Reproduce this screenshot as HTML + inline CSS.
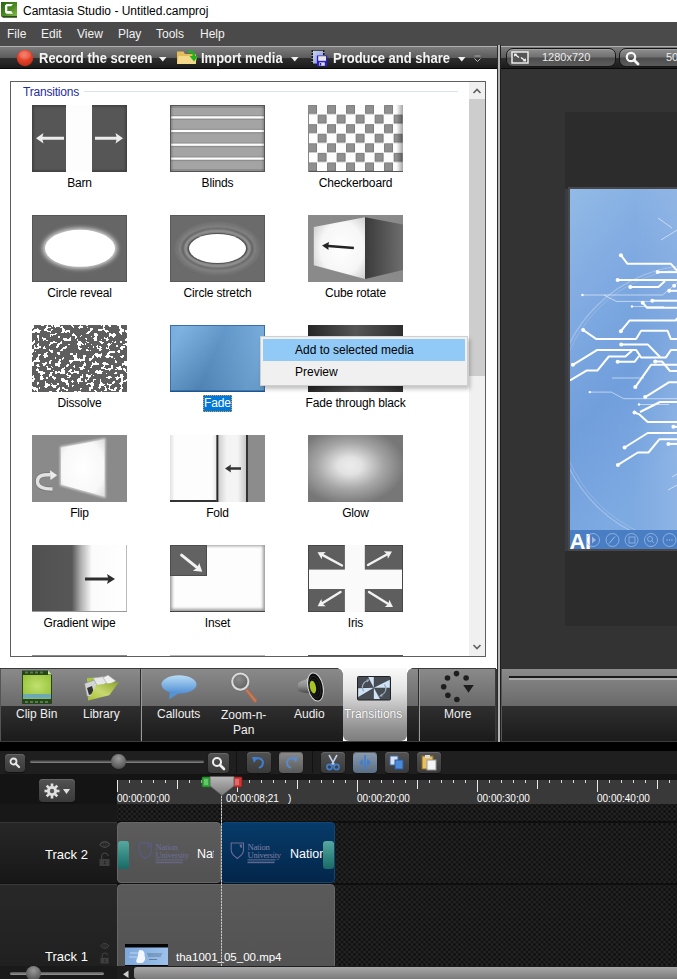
<!DOCTYPE html>
<html><head><meta charset="utf-8">
<style>
*{margin:0;padding:0;box-sizing:border-box}
html,body{width:677px;height:979px;overflow:hidden;background:#333;font-family:"Liberation Sans",sans-serif}
.a{position:absolute}
.t{position:absolute;white-space:nowrap;line-height:1}
#title{left:0;top:0;width:677px;height:22px;background:#fff}
#menu{left:0;top:22px;width:677px;height:24px;background:#4a4a4a}
#menu .t{color:#f2f2f2;font-size:12px;top:6px}
#tb{left:0;top:46px;width:497px;height:23px;background:linear-gradient(#b0b0b0 0,#b0b0b0 1px,#7c7c7c 1px,#5a5a5a 12px,#2e2e2e 12px,#1b1b1b 22px,#080808 22px)}
#tb .t{color:#f4f4f4;font-size:13px;font-weight:bold;top:5px;transform:scaleY(1.06);transform-origin:0 0}
#left{left:0;top:69px;width:497px;height:600px;background:#fff}
#box{left:10px;top:81px;width:476px;height:576px;border:1px solid #5e5e5e;background:#fff;overflow:hidden}
.th{position:absolute;width:95px;height:67px;overflow:hidden}
.tl{position:absolute;top:708px;font-size:12px;color:#f0f0f0;line-height:1;white-space:nowrap}
.btn{border-radius:4px;background:linear-gradient(#525252,#3a3a3a);box-shadow:inset 0 1px 0 #666,0 1px 1px #111}
.tex{background:radial-gradient(circle at 50% 50%,#0e0e0e 0,#141414 1.2px,transparent 2.2px) 0 0/5px 5px,radial-gradient(circle at 50% 50%,#0e0e0e 0,#141414 1.2px,transparent 2.2px) 2.5px 2.5px/5px 5px,#2a2a2a}
.tc{position:absolute;top:794px;font-size:10px;color:#fff;white-space:nowrap;line-height:1}
.lb{position:absolute;width:139px;text-align:center;font-size:12px;letter-spacing:-0.15px;color:#000;line-height:1}
</style></head><body>
<!-- title bar -->
<div id="title" class="a">
  <svg class="a" style="left:0;top:0" width="20" height="20" viewBox="0 0 20 20">
    <defs><linearGradient id="lg" x1="0" y1="0" x2="1" y2="1"><stop offset="0" stop-color="#2a6214"/><stop offset=".55" stop-color="#4a8a22"/><stop offset="1" stop-color="#86b84a"/></linearGradient></defs>
    <rect x="1" y="2" width="16" height="14" fill="url(#lg)"/>
    <path d="M1 16 L17 16 L17 17.7 L3 17.7Z" fill="#2b4f14"/>
    <path d="M6.5 4 L13 4 L11.2 6.3 L7.3 6.3 L7.3 11.1 L11.2 11.1 L13 13.7 L6.5 13.7 L5 12.2 L5 5.5Z" fill="#fff"/>
  </svg>
  <div class="t" style="left:23px;top:5px;font-size:12px;color:#000">Camtasia Studio - Untitled.camproj</div>
</div>
<!-- menu -->
<div id="menu" class="a">
  <div class="t" style="left:7px">File</div>
  <div class="t" style="left:41px">Edit</div>
  <div class="t" style="left:77px">View</div>
  <div class="t" style="left:118px">Play</div>
  <div class="t" style="left:156px">Tools</div>
  <div class="t" style="left:200px">Help</div>
</div>
<!-- toolbar -->
<div id="tb" class="a">
  
  <svg class="a" style="left:16px;top:3px" width="18" height="18" viewBox="0 0 18 18">
   <defs><radialGradient id="rc" cx=".45" cy=".3" r=".75"><stop offset="0" stop-color="#f6705a"/><stop offset=".5" stop-color="#e5432a"/><stop offset="1" stop-color="#b82a14"/></radialGradient></defs>
   <circle cx="9" cy="9" r="8.2" fill="url(#rc)"/>
   <ellipse cx="9" cy="6" rx="6" ry="4" fill="#fff" opacity=".13"/>
  </svg>
  <svg class="a" style="left:159px;top:11px" width="8" height="5"><path d="M0 0H7.5L3.75 4.5Z" fill="#f0f0f0"/></svg>
  <svg class="a" style="left:176px;top:3px" width="22" height="16" viewBox="0 0 22 16">
   <path d="M1 2.5 L1 15 L20 15 L20 5 L9 5 L7.5 2.5Z" fill="#e3bf5c"/>
   <path d="M2.5 7 L21 7 L19.5 15 L1 15Z" fill="#f4d98a"/>
   <path d="M12 3 C16 1.5, 18 4, 18 7.5" fill="none" stroke="#1fb31f" stroke-width="2.6"/>
   <path d="M13.5 7 L22 7 L18 12.5Z" fill="#1fb31f"/>
  </svg>
  <svg class="a" style="left:291px;top:11px" width="8" height="5"><path d="M0 0H7.5L3.75 4.5Z" fill="#f0f0f0"/></svg>
  <svg class="a" style="left:311px;top:4px" width="17" height="17" viewBox="0 0 17 17">
   <defs><linearGradient id="pf" x1="0" y1="0" x2="1" y2="1"><stop offset="0" stop-color="#c8d4f4"/><stop offset="1" stop-color="#8898d0"/></linearGradient></defs>
   <rect x="0.5" y="0.2" width="13" height="14" fill="#151515"/>
   <rect x="2" y="0.8" width="10" height="12.8" fill="url(#pf)"/>
   <g fill="#e8e8e8"><rect x="0.6" y="2" width="1" height="1"/><rect x="0.6" y="5" width="1" height="1"/><rect x="0.6" y="8" width="1" height="1"/><rect x="0.6" y="11" width="1" height="1"/><rect x="12.4" y="2" width="1" height="1"/><rect x="12.4" y="5" width="1" height="1"/></g>
   <rect x="5.9" y="5.5" width="10.3" height="10.7" fill="#2a1ec8"/>
   <rect x="7.2" y="6.2" width="7.8" height="4.6" fill="#e8e8e0"/>
   <rect x="8.3" y="12.3" width="5.5" height="3.5" fill="#d8d8d8"/><rect x="9" y="13" width="1.2" height="2.5" fill="#2a1ec8"/>
  </svg>
  <svg class="a" style="left:458px;top:11px" width="8" height="5"><path d="M0 0H7.5L3.75 4.5Z" fill="#f0f0f0"/></svg>
  <svg class="a" style="left:474px;top:9px" width="7" height="8"><path d="M0.5 1H6.5" stroke="#aaa" stroke-width="1"/><path d="M0.5 3.5L3.5 6.5L6.5 3.5" fill="none" stroke="#bbb" stroke-width="1"/></svg>
  <div class="t" style="left:39px">Record the screen</div>
  <div class="t" style="left:201px">Import media</div>
  <div class="t" style="left:333px">Produce and share</div>
</div>
<!-- left panel -->
<div id="left" class="a"></div>
<div id="box" class="a"></div>

<!-- transitions group -->
<div class="t" style="left:23px;top:86px;font-size:12px;letter-spacing:-0.2px;color:#1f2c9e">Transitions</div>
<div class="a" style="left:84px;top:91px;width:374px;height:1px;background:#dce3ee"></div>
<!-- scrollbar -->
<div class="a" style="left:469px;top:82px;width:16px;height:574px;background:#f0f0f0"></div>
<div class="a" style="left:469px;top:99px;width:16px;height:277px;background:#cdcdcd"></div>
<svg class="a" style="left:469px;top:82px" width="16" height="17"><path d="M4.5 11 L8 7.5 L11.5 11" fill="none" stroke="#606060" stroke-width="1.6"/></svg>
<svg class="a" style="left:469px;top:639px" width="16" height="17"><path d="M4.5 6 L8 9.5 L11.5 6" fill="none" stroke="#606060" stroke-width="1.6"/></svg>

<!-- Barn -->
<svg class="th" style="left:32px;top:105px" viewBox="0 0 95 67">
 <defs><filter id="ish" x="-10%" y="-10%" width="120%" height="120%"><feGaussianBlur stdDeviation="1.2"/></filter></defs>
 <rect width="95" height="67" fill="#3e3e3e"/><rect x="1.5" y="1.5" width="92" height="64" fill="#565656" filter="url(#ish)"/>
 <rect x="34" y="0" width="26" height="67" fill="#fdfdfd"/>
 <g fill="#ececec"><path d="M4 33.3 L11.5 28 L10.5 31.8 L32 31.8 L32 34.8 L10.5 34.8 L11.5 38.6Z"/><path d="M91 33.3 L83.5 28 L84.5 31.8 L63 31.8 L63 34.8 L84.5 34.8 L83.5 38.6Z"/></g>
</svg>
<div class="lb" style="left:10px;top:177px">Barn</div>

<!-- Blinds -->
<svg class="th" style="left:170px;top:105px" viewBox="0 0 95 67">
 <defs><linearGradient id="blx" x1="0" y1="0" x2="1" y2="0"><stop offset="0" stop-color="#000" stop-opacity=".25"/><stop offset=".04" stop-color="#000" stop-opacity="0"/><stop offset=".96" stop-color="#000" stop-opacity="0"/><stop offset="1" stop-color="#000" stop-opacity=".25"/></linearGradient></defs>
 <rect width="95" height="67" fill="#a4a4a4"/>
 <g fill="#8e8e8e"><rect x="0" y="0" width="95" height="3"/><rect x="0" y="13.4" width="95" height="1.5"/><rect x="0" y="27" width="95" height="1.5"/><rect x="0" y="40.7" width="95" height="1.5"/><rect x="0" y="54.6" width="95" height="1.5"/><rect x="0" y="10.2" width="95" height="1.2"/><rect x="0" y="23.8" width="95" height="1.2"/><rect x="0" y="37.5" width="95" height="1.2"/><rect x="0" y="51.4" width="95" height="1.2"/><rect x="0" y="64" width="95" height="3"/></g>
 <g fill="#fdfdfd"><rect x="0" y="11.3" width="95" height="2.2"/><rect x="0" y="24.9" width="95" height="2.2"/><rect x="0" y="38.6" width="95" height="2.2"/><rect x="0" y="52.5" width="95" height="2.2"/></g>
 <rect width="95" height="67" fill="url(#blx)"/>
 <rect x="0.5" y="0.5" width="94" height="66" fill="none" stroke="#555" stroke-width="1"/>
</svg>
<div class="lb" style="left:148px;top:177px">Blinds</div>

<!-- Checkerboard -->
<svg class="th" style="left:308px;top:105px" viewBox="0 0 95 67">
 <defs><pattern id="ck" width="19" height="19.14" patternUnits="userSpaceOnUse">
   <rect width="19" height="19.14" fill="#fdfdfd"/>
   <rect x="0.6" y="0.6" width="8" height="8" fill="#909090" stroke="#6e6e6e" stroke-width=".8"/>
   <rect x="10.1" y="10.17" width="8" height="8" fill="#909090" stroke="#6e6e6e" stroke-width=".8"/>
 </pattern>
 <linearGradient id="ckr" x1="0" y1="0" x2="1" y2="0"><stop offset="0" stop-color="#000" stop-opacity="0"/><stop offset=".93" stop-color="#000" stop-opacity="0"/><stop offset="1" stop-color="#000" stop-opacity=".35"/></linearGradient></defs>
 <rect width="95" height="67" fill="url(#ck)"/>
 <rect width="95" height="67" fill="url(#ckr)"/>
 <rect x="0" y="66" width="95" height="1" fill="#555"/><rect x="0" y="0" width="1" height="67" fill="#888"/>
</svg>
<div class="lb" style="left:286px;top:177px">Checkerboard</div>

<!-- Circle reveal -->
<svg class="th" style="left:32px;top:215px" viewBox="0 0 95 67">
 <defs><filter id="gl1" x="-30%" y="-30%" width="160%" height="160%"><feGaussianBlur stdDeviation="2.2"/></filter></defs>
 <rect width="95" height="67" fill="#666"/>
 <rect x="0" y="0" width="95" height="67" fill="none" stroke="#555" stroke-width="2"/>
 <ellipse cx="48" cy="33.3" rx="37.5" ry="20.5" fill="#d0d0d0" filter="url(#gl1)"/>
 <ellipse cx="48" cy="33.3" rx="35" ry="18.5" fill="#fff"/>
</svg>
<div class="lb" style="left:10px;top:287px">Circle reveal</div>

<!-- Circle stretch -->
<svg class="th" style="left:170px;top:215px" viewBox="0 0 95 67">
 <defs><filter id="gl2" x="-30%" y="-30%" width="160%" height="160%"><feGaussianBlur stdDeviation="0.9"/></filter></defs>
 <rect width="95" height="67" fill="#6b6b6b"/>
 <rect x="0" y="0" width="95" height="67" fill="none" stroke="#5a5a5a" stroke-width="2"/>
 <g filter="url(#gl2)" fill="none">
 <ellipse cx="47.5" cy="33.5" rx="41" ry="25" stroke="#7a7a7a" stroke-width="2"/>
 <ellipse cx="47.5" cy="33.5" rx="37.5" ry="22" stroke="#8c8c8c" stroke-width="2"/>
 <ellipse cx="47.5" cy="33.5" rx="34.5" ry="19.5" stroke="#555" stroke-width="2"/>
 <ellipse cx="47.5" cy="33.5" rx="32" ry="17.5" stroke="#a8a8a8" stroke-width="2"/>
 </g>
 <ellipse cx="47.5" cy="33.5" rx="30" ry="15.5" fill="#555"/>
 <ellipse cx="47.5" cy="33.5" rx="28.5" ry="14.5" fill="#fff"/>
</svg>
<div class="lb" style="left:148px;top:287px">Circle stretch</div>

<!-- Cube rotate -->
<svg class="th" style="left:308px;top:215px" viewBox="0 0 95 67">
 <defs>
  <radialGradient id="cf" cx=".55" cy=".5" r=".7"><stop offset="0" stop-color="#fff"/><stop offset=".6" stop-color="#f6f6f6"/><stop offset="1" stop-color="#c8c8c8"/></radialGradient>
  <linearGradient id="cs" x1="0" y1="0" x2="1" y2="0"><stop offset="0" stop-color="#3a3a3a"/><stop offset="1" stop-color="#6e6e6e"/></linearGradient>
 </defs>
 <rect width="95" height="67" fill="#8a8a8a"/>
 <path d="M5.8 12 L57 2.3 L57 64 L5.8 50.3Z" fill="url(#cf)"/>
 <path d="M57 2.3 L95 9.6 L95 55 L57 64Z" fill="url(#cs)"/>
 <path d="M14 30.5 L21 27 L20.5 29.8 L46 31.8 L45.8 34.2 L20.3 32.2 L20.6 35 Z" fill="#252525"/>
</svg>
<div class="lb" style="left:286px;top:287px">Cube rotate</div>

<!-- Dissolve -->
<svg class="th" style="left:32px;top:325px" viewBox="0 0 95 67">
 <defs><filter id="dz" x="0" y="0" width="100%" height="100%">
  <feTurbulence type="fractalNoise" baseFrequency="0.24" numOctaves="2" seed="11" result="n"/>
  <feColorMatrix in="n" type="matrix" values="0 0 0 0 1  0 0 0 0 1  0 0 0 0 1  6 0 0 0 -3.0"/>
  <feComponentTransfer><feFuncA type="discrete" tableValues="0 1"/></feComponentTransfer>
 </filter></defs>
 <rect width="95" height="67" fill="#5e5e5e"/>
 <rect width="95" height="67" fill="#fff" filter="url(#dz)"/>
</svg>
<div class="lb" style="left:10px;top:397px">Dissolve</div>

<!-- Fade -->
<svg class="th" style="left:170px;top:325px" viewBox="0 0 95 67">
 <defs><linearGradient id="fd" x1="0" y1="0" x2="1" y2=".3"><stop offset="0" stop-color="#6aa6dc"/><stop offset=".12" stop-color="#74addf"/><stop offset=".55" stop-color="#5690c6"/><stop offset="1" stop-color="#70aadd"/></linearGradient><linearGradient id="fd2" x1="0" y1="0" x2="0" y2="1"><stop offset="0" stop-color="#fff" stop-opacity=".08"/><stop offset="1" stop-color="#000" stop-opacity=".1"/></linearGradient></defs>
 <rect width="95" height="67" fill="url(#fd)"/><rect width="95" height="67" fill="url(#fd2)"/>
 <rect x="0.5" y="0.5" width="94" height="66" fill="none" stroke="#3a70aa" stroke-width="1"/><rect x="0" y="65.5" width="95" height="1.5" fill="#1d5592"/>
</svg>
<div class="a" style="left:203px;top:395px;width:29px;height:17px;background:#0078d7;outline:1px dotted #f09a30;outline-offset:-1px"></div>
<div class="lb" style="left:148px;top:397px;color:#fff">Fade</div>

<!-- Fade through black -->
<svg class="th" style="left:308px;top:325px" viewBox="0 0 95 67">
 <defs><linearGradient id="fb" x1="0" y1="0" x2="1" y2="0"><stop offset="0" stop-color="#262626"/><stop offset=".5" stop-color="#555"/><stop offset="1" stop-color="#2e2e2e"/></linearGradient></defs>
 <rect width="95" height="67" fill="url(#fb)"/>
</svg>
<div class="lb" style="left:286px;top:397px">Fade through black</div>

<!-- Flip -->
<svg class="th" style="left:32px;top:435px" viewBox="0 0 95 67">
 <defs>
  <filter id="fg" x="-20%" y="-20%" width="140%" height="140%"><feGaussianBlur stdDeviation="1.3"/></filter>
  <radialGradient id="ff" cx=".5" cy=".5" r=".7"><stop offset="0" stop-color="#fff"/><stop offset=".7" stop-color="#f8f8f8"/><stop offset="1" stop-color="#dcdcdc"/></radialGradient>
 </defs>
 <rect width="95" height="67" fill="#8a8a8a"/>
 <path d="M28 11.5 L73.5 3 L73.5 63 L28 50.5Z" fill="#d8d8d8" filter="url(#fg)"/>
 <path d="M29 12.5 L72.5 4.5 L72.5 61.5 L29 49.5Z" fill="url(#ff)"/>
 <path d="M20.5 54 C11 54, 5.5 52, 5.5 46.5 C5.5 41, 10 39.3, 18.5 39.8" fill="none" stroke="#5e5e5e" stroke-opacity=".5" stroke-width="4.8"/>
 <path d="M20.5 54 C11 54, 5.5 52, 5.5 46.5 C5.5 41, 10 39.3, 18.5 39.8" fill="none" stroke="#e2e2e2" stroke-width="3.4"/>
 <path d="M18 35.3 L25.2 40.3 L18.5 45Z" fill="#ececec"/>
</svg>
<div class="lb" style="left:10px;top:507px">Flip</div>

<!-- Fold -->
<svg class="th" style="left:170px;top:435px" viewBox="0 0 95 67">
 <defs>
  <linearGradient id="fo1" x1="0" y1="0" x2="1" y2="0"><stop offset="0" stop-color="#e0e0e0"/><stop offset=".1" stop-color="#fdfdfd"/><stop offset=".9" stop-color="#fdfdfd"/><stop offset="1" stop-color="#e6e6e6"/></linearGradient>
  <linearGradient id="fo2" x1="0" y1="0" x2="1" y2="0"><stop offset="0" stop-color="#cfcfcf"/><stop offset=".3" stop-color="#f4f4f4"/><stop offset=".7" stop-color="#f4f4f4"/><stop offset="1" stop-color="#c8c8c8"/></linearGradient>
 </defs>
 <rect width="95" height="67" fill="#8c8c8c"/>
 <rect x="0" y="0" width="46.5" height="65" fill="url(#fo1)"/>
 <rect x="0" y="65" width="46.5" height="2" fill="#333"/>
 <rect x="46.5" y="0" width="2" height="67" fill="#2a2a2a"/>
 <rect x="48.5" y="0" width="27.5" height="67" fill="url(#fo2)"/>
 <rect x="76" y="0" width="2" height="67" fill="#333"/>
 <path d="M55 33.5 L61 29.5 L60.5 32.2 L71 32.2 L71 34.8 L60.5 34.8 L61 37.5Z" fill="#333"/>
</svg>
<div class="lb" style="left:148px;top:507px">Fold</div>

<!-- Glow -->
<svg class="th" style="left:308px;top:435px" viewBox="0 0 95 67">
 <defs><radialGradient id="gw" cx=".44" cy=".46" r=".58"><stop offset="0" stop-color="#ececec"/><stop offset=".22" stop-color="#e2e2e2"/><stop offset=".6" stop-color="#a6a6a6"/><stop offset="1" stop-color="#777"/></radialGradient></defs>
 <rect width="95" height="67" fill="url(#gw)"/>
</svg>
<div class="lb" style="left:286px;top:507px">Glow</div>

<!-- Gradient wipe -->
<svg class="th" style="left:32px;top:545px" viewBox="0 0 95 67">
 <defs><linearGradient id="gwp" x1="0" y1="0" x2="1" y2="0"><stop offset="0" stop-color="#505050"/><stop offset=".42" stop-color="#575757"/><stop offset=".52" stop-color="#b4b4b4"/><stop offset=".63" stop-color="#fbfbfb"/><stop offset="1" stop-color="#fff"/></linearGradient></defs>
 <rect width="95" height="67" fill="url(#gwp)"/>
 <rect x="94" y="0" width="1" height="67" fill="#bbb"/><rect x="0" y="66" width="95" height="1" fill="#999"/>
 <path d="M83 34 L75 29 L76 32.6 L53 32.6 L53 35.4 L76 35.4 L75 39Z" fill="#2e2e2e"/>
</svg>
<div class="lb" style="left:10px;top:617px">Gradient wipe</div>

<!-- Inset -->
<svg class="th" style="left:170px;top:545px" viewBox="0 0 95 67">
 <defs><filter id="insh" x="-5%" y="-5%" width="110%" height="110%"><feGaussianBlur stdDeviation="1.5"/></filter></defs>
 <rect width="95" height="67" fill="#9a9a9a"/>
 <rect x="2" y="1" width="91" height="63" fill="#fdfdfd" filter="url(#insh)"/>
 <rect x="0" y="66" width="95" height="1" fill="#444"/>
 <rect x="0" y="0" width="37" height="31" fill="#4c4c4c"/><rect x="1" y="1" width="35" height="29" fill="#626262"/>
 <path d="M11.6 10.1 L26.9 22.4" stroke="#f2f2f2" stroke-width="3" stroke-linecap="round"/><path d="M32.3 26.8 L22.9 25.7 L27.2 22.7 L29.2 17.9Z" fill="#f2f2f2"/>
</svg>
<div class="lb" style="left:148px;top:617px">Inset</div>

<!-- Iris -->
<svg class="th" style="left:308px;top:545px" viewBox="0 0 95 67">
 <rect width="95" height="67" fill="#474747"/>
 <rect x="1" y="1" width="93" height="65" fill="#5e5e5e"/>
 <rect x="36.9" y="0" width="19.9" height="67" fill="#fafafa"/>
 <rect x="1" y="24.6" width="93" height="19.4" fill="#fafafa"/>
 <path d="M34.0 20.5 L14.8 10.1" stroke="#f2f2f2" stroke-width="2.4" stroke-linecap="round"/><path d="M9.5 7.3 L17.7 6.9 L14.3 9.9 L13.7 14.3Z" fill="#f2f2f2"/><path d="M60.0 20.0 L78.8 9.5" stroke="#f2f2f2" stroke-width="2.4" stroke-linecap="round"/><path d="M84.0 6.6 L79.9 13.7 L79.2 9.3 L75.8 6.3Z" fill="#f2f2f2"/><path d="M32.5 47.0 L14.7 58.1" stroke="#f2f2f2" stroke-width="2.4" stroke-linecap="round"/><path d="M9.6 61.3 L13.3 54.0 L14.3 58.4 L17.8 61.2Z" fill="#f2f2f2"/><path d="M61.0 47.0 L79.9 58.8" stroke="#f2f2f2" stroke-width="2.4" stroke-linecap="round"/><path d="M85.0 62.0 L76.8 61.9 L80.3 59.1 L81.3 54.7Z" fill="#f2f2f2"/>
</svg>
<div class="lb" style="left:286px;top:617px">Iris</div>

<div class="a" style="left:32px;top:655px;width:95px;height:1px;background:#8a8a8a"></div>
<div class="a" style="left:170px;top:655px;width:95px;height:1px;background:#b8b8b8"></div>
<div class="a" style="left:308px;top:655px;width:95px;height:1px;background:#555"></div>
<!-- context menu -->
<div class="a" style="left:262px;top:339px;width:208px;height:50px;background:rgba(0,0,0,.25);filter:blur(2px)"></div>
<div class="a" style="left:260px;top:336px;width:208px;height:50px;background:#f0f0f0;border:1px solid #cfcfcf"></div>
<div class="a" style="left:263px;top:339px;width:202px;height:22px;background:#91c9f7"></div>
<div class="t" style="left:295px;top:344px;font-size:12px;color:#000">Add to selected media</div>
<div class="t" style="left:295px;top:366px;font-size:12px;color:#000">Preview</div>



<!-- ===== tab bar ===== -->
<div class="a" style="left:0;top:668px;width:496px;height:74px;background:linear-gradient(#3a3a3a 0,#3a3a3a 1px,#8a8a8a 1px,#6a6a6a 37.5px,#2f2f2f 37.5px,#1b1b1b 73px,#3c3c3c 73px)"></div>
<div class="a" style="left:0;top:669px;width:1px;height:72px;background:#555"></div>
<div class="a" style="left:140px;top:669px;width:1px;height:72px;background:#2a2a2a"></div>
<div class="a" style="left:141px;top:669px;width:1px;height:72px;background:#9a9a9a"></div>
<div class="a" style="left:418px;top:669px;width:1px;height:72px;background:#2a2a2a"></div>
<div class="a" style="left:419px;top:669px;width:1px;height:72px;background:#9a9a9a"></div>
<div class="a" style="left:495px;top:669px;width:1px;height:72px;background:#3a3a3a"></div>
<div class="a" style="left:343px;top:668px;width:64px;height:73px;background:#fff"></div>
<div class="a" style="left:343px;top:668px;width:64px;height:73px;border-radius:0 0 6px 6px;background:linear-gradient(#fafafa 0,#e4e4e4 30%,#b4b4b4 60%,#8e8e8e 85%,#7e7e7e 100%)"></div>
<div class="a" style="left:337px;top:668px;width:6px;height:6px;background:radial-gradient(circle at 0 100%,transparent 5.5px,#fff 6px)"></div>
<div class="a" style="left:407px;top:668px;width:6px;height:6px;background:radial-gradient(circle at 100% 100%,transparent 5.5px,#fff 6px)"></div>
<!-- clip bin icon -->
<svg class="a" style="left:21px;top:670px" width="32" height="35" viewBox="0 0 32 35">
 <defs><radialGradient id="cbg" cx=".5" cy=".45" r=".7"><stop offset="0" stop-color="#c0e070"/><stop offset="1" stop-color="#94c034"/></radialGradient></defs>
 <path d="M1 0.5 H27 L31 4.5 V34 H1Z" fill="#25451a"/>
 <rect x="2" y="5" width="28" height="24" fill="url(#cbg)"/>
 <rect x="2" y="24" width="28" height="4.5" fill="#6ea8b2"/>
 <g fill="#5a7a4a"><rect x="4" y="1.5" width="3" height="2"/><rect x="9" y="1.5" width="3" height="2"/><rect x="14" y="1.5" width="3" height="2"/><rect x="19" y="1.5" width="3" height="2"/><rect x="4" y="31" width="3" height="2"/><rect x="9" y="31" width="3" height="2"/><rect x="14" y="31" width="3" height="2"/><rect x="19" y="31" width="3" height="2"/><rect x="24" y="31" width="3" height="2"/></g>
 <path d="M27 0.5 L31 4.5 L27 4.5Z" fill="#c8e8a0"/>
</svg>
<!-- library icon -->
<svg class="a" style="left:84px;top:675px" width="36" height="28" viewBox="0 0 36 28">
 <defs><linearGradient id="lbf" x1="0" y1="1" x2="1" y2="0"><stop offset="0" stop-color="#a8c030"/><stop offset=".45" stop-color="#c8d870"/><stop offset="1" stop-color="#8aa428"/></linearGradient></defs>
 <path d="M3 3 L24 2 L26 8 L4 25.6Z" fill="#a8c83a"/>
 <path d="M0.5 8.5 L13 4 L22 9 L9 23 L3 21Z" fill="#d4d4d4" stroke="#888" stroke-width=".6"/>
 <path d="M9 3 L20 1.5 L25 7 L14 12Z" fill="#e6e6e6" stroke="#999" stroke-width=".6"/>
 <path d="M19 2.5 L24 0 L32 6 L24 10Z" fill="#f0f0f0" stroke="#999" stroke-width=".6"/>
 <path d="M3 13 L8 11 L10 18 L5 20Z" fill="#333"/>
 <path d="M4 25.6 L12 10 L35 7 L25.3 20.3Z" fill="url(#lbf)"/>
</svg>
<!-- callouts icon -->
<svg class="a" style="left:160px;top:674px" width="38" height="28" viewBox="0 0 38 28">
 <defs><linearGradient id="clg" x1="0" y1="0" x2="0" y2="1"><stop offset="0" stop-color="#b8dcf6"/><stop offset="1" stop-color="#4f8fd4"/></linearGradient></defs>
 <ellipse cx="19" cy="10.5" rx="17.5" ry="9.2" fill="url(#clg)"/>
 <path d="M10 17 L9 25.5 L19 19Z" fill="#5593d5"/>
</svg>
<!-- zoom-n-pan icon -->
<svg class="a" style="left:228px;top:670px" width="32" height="34" viewBox="0 0 32 34">
 <defs><radialGradient id="zg" cx=".4" cy=".35" r=".7"><stop offset="0" stop-color="#8a8a8a"/><stop offset="1" stop-color="#606060"/></radialGradient></defs>
 <path d="M16.6 20.6 L19.8 18.6 L29.6 30.2 L26.2 33Z" fill="#b06848"/>
 <path d="M18.5 20 L28 31.5" stroke="#c88466" stroke-width="1.2"/>
 <circle cx="12.3" cy="11.6" r="8.2" fill="url(#zg)"/>
 <circle cx="12.3" cy="11.6" r="8.2" fill="none" stroke="#dadada" stroke-width="2.2"/>
 <circle cx="12.3" cy="11.6" r="9.4" fill="none" stroke="#555" stroke-opacity=".5" stroke-width=".6"/>
</svg>
<!-- audio icon -->
<svg class="a" style="left:296px;top:671px" width="30" height="32" viewBox="0 0 30 32">
 <defs><linearGradient id="spk" x1="0" y1="0" x2="0" y2="1"><stop offset="0" stop-color="#c8c8c8"/><stop offset=".5" stop-color="#8a8a8a"/><stop offset="1" stop-color="#111"/></linearGradient></defs>
 <path d="M2 13.5 C2 11.5, 5 10, 9 9 L16 3 L22 28 L12 22 C8 22, 3 21, 2 19Z" fill="url(#spk)"/>
 <g transform="rotate(-12 19.5 16)">
  <ellipse cx="19.5" cy="16" rx="8" ry="14.8" fill="#d8d8d8"/>
  <ellipse cx="19.5" cy="16" rx="7" ry="13.8" fill="#0c0c0c"/>
  <ellipse cx="19" cy="16" rx="5.5" ry="11" fill="none" stroke="#2a2a2a" stroke-width=".8"/>
  <ellipse cx="18.5" cy="16" rx="4" ry="8" fill="none" stroke="#222" stroke-width=".8"/>
  <ellipse cx="17" cy="15.5" rx="3" ry="6.5" fill="#a8c424"/>
 </g>
</svg>
<!-- transitions icon -->
<svg class="a" style="left:357px;top:676px" width="34" height="25" viewBox="0 0 34 25">
 <rect x="0.5" y="0.5" width="33" height="23.5" rx="1" fill="#474c54" stroke="#222" stroke-width="1"/>
 <path d="M16.8 1 V23.5 M1 11.7 H33" stroke="#3a3e45" stroke-width=".8"/>
 <g fill="#cfe2f6"><path d="M11.2 1 L16.8 1 L16.8 11.7Z"/><path d="M16.8 11.7 L32.8 3.7 L32.8 11.7Z"/><path d="M16.8 11.7 L16.8 23 L23 23Z"/><path d="M16.8 11.7 L1.2 12.3 L1.2 21Z"/></g>
 <path d="M11.5 4.5 C6 5.5, 3.5 11, 6.8 15.5" fill="none" stroke="#9aabbc" stroke-width="1.1"/>
 <path d="M13 3.2 L10 6.5 L9.5 3.5Z" fill="#9aabbc"/>
 <path d="M27.2 8.4 C30.5 12, 29 17.5, 23 19.7" fill="none" stroke="#9aabbc" stroke-width="1.1"/>
 <path d="M22 20.5 L25 17.5 L25.5 20.5Z" fill="#9aabbc"/>
</svg>
<!-- more icon -->
<svg class="a" style="left:440px;top:670px" width="36" height="34" viewBox="0 0 36 34">
 <g fill="#1e1e1e"><circle cx="16.5" cy="3.6" r="2.8"/><circle cx="26.1" cy="8" r="2.8"/><circle cx="7.5" cy="8" r="2.8"/><circle cx="3.7" cy="16.7" r="2.8"/><circle cx="7.9" cy="25.3" r="2.8"/><circle cx="16.9" cy="29.5" r="2.8"/></g>
 <path d="M23.2 15 H33.8 L28.5 22.8Z" fill="#1e1e1e"/>
</svg>
<div class="tl" style="left:16px">Clip Bin</div>
<div class="tl" style="left:83px">Library</div>
<div class="tl" style="left:157px">Callouts</div>
<div class="tl" style="left:221px;line-height:15px;text-align:center">Zoom-n-<br>Pan</div>
<div class="tl" style="left:294px">Audio</div>
<div class="tl" style="left:344px;color:#fff;text-shadow:0 0 1px #666,0 0 1px #888">Transitions</div>
<div class="tl" style="left:444px">More</div>
<!-- right toolbar under preview -->
<div class="a" style="left:501px;top:668px;width:176px;height:74px;background:linear-gradient(#3a3a3a 0,#3a3a3a 1px,#8a8a8a 1px,#6a6a6a 37.5px,#2f2f2f 37.5px,#1b1b1b 73px,#3c3c3c 73px)"></div>
<div class="a" style="left:501px;top:669px;width:1px;height:72px;background:#555"></div>
<div class="a" style="left:509px;top:676px;width:168px;height:2px;background:#1a1a1a"></div>
<div class="a" style="left:509px;top:678px;width:168px;height:2px;background:#a8a8a8"></div>
<div class="a" style="left:0;top:742px;width:677px;height:9px;background:#000"></div>

<!-- ===== right preview ===== -->
<div class="a" style="left:497px;top:45px;width:1px;height:697px;background:#2a2a2a"></div>
<div class="a" style="left:498px;top:45px;width:2px;height:697px;background:#b4b4b4"></div>
<div class="a" style="left:500px;top:45px;width:1px;height:697px;background:#1e1e1e"></div>

<div class="a" style="left:501px;top:46px;width:176px;height:23px;background:linear-gradient(#b0b0b0 0,#b0b0b0 1px,#7c7c7c 1px,#5a5a5a 12px,#2e2e2e 12px,#1b1b1b 22px,#080808 22px)"></div>
<div class="a" style="left:506px;top:48px;width:110px;height:19px;border-radius:7px;background:linear-gradient(#8e8e8e 0,#707070 48%,#4c4c4c 52%,#5c5c5c 100%);border:1px solid #151515;box-shadow:inset 0 1px 0 #a0a0a0"></div>
<div class="a" style="left:619px;top:48px;width:70px;height:19px;border-radius:7px;background:linear-gradient(#8e8e8e 0,#707070 48%,#4c4c4c 52%,#5c5c5c 100%);border:1px solid #151515;box-shadow:inset 0 1px 0 #a0a0a0"></div>
<svg class="a" style="left:511px;top:51px" width="18" height="13" viewBox="0 0 18 13">
 <rect x="1" y="1" width="16" height="11" fill="#555" stroke="#f4f4f4" stroke-width="1.4"/>
 <path d="M4 3.5 L8 6.5 M10 6.5 L14 9.5" stroke="#f4f4f4" stroke-width="1.4"/>
 <path d="M3 2.5 L6.5 2.7 L3.2 5.8Z M15 10.5 L11.5 10.3 L14.8 7.2Z" fill="#f4f4f4"/>
</svg>
<div class="t" style="left:542px;top:52px;font-size:11px;color:#ececec">1280x720</div>
<svg class="a" style="left:625px;top:51px" width="15" height="15" viewBox="0 0 15 15"><circle cx="6" cy="6" r="4.2" fill="none" stroke="#f4f4f4" stroke-width="2.2"/><path d="M9 9 L13 13" stroke="#f4f4f4" stroke-width="2.8" stroke-linecap="round"/></svg>
<div class="t" style="left:666px;top:52px;font-size:11px;color:#ececec">50</div>

<div class="a" style="left:501px;top:69px;width:176px;height:600px;background:#333"></div>
<div class="a" style="left:565px;top:112px;width:112px;height:514px;background:#2c2c2c"></div>
<div class="a" style="left:565px;top:189px;width:5px;height:362px;background:#383d45"></div>
<div class="a" style="left:568px;top:187px;width:109px;height:364px;background:#49474a"></div>
<svg class="a" style="left:570px;top:189px" width="107" height="360" viewBox="0 0 107 360">
<defs><linearGradient id="ibg" x1="0" y1="0" x2=".35" y2="1"><stop offset="0" stop-color="#92bbe6"/><stop offset=".3" stop-color="#82ace2"/><stop offset=".65" stop-color="#719fdc"/><stop offset="1" stop-color="#7eaae2"/></linearGradient>
<linearGradient id="ibg2" x1="0" y1="0" x2="1" y2="0"><stop offset="0" stop-color="#fff" stop-opacity="0"/><stop offset=".6" stop-color="#fff" stop-opacity="0"/><stop offset="1" stop-color="#fff" stop-opacity=".12"/></linearGradient></defs>
<rect width="107" height="341" fill="url(#ibg)"/>
<rect width="107" height="341" fill="url(#ibg2)"/>
<circle cx="126" cy="217" r="141" fill="none" stroke="#fff" stroke-opacity=".28" stroke-width="1.2"/>
<circle cx="126" cy="217" r="138" fill="none" stroke="#fff" stroke-opacity=".18" stroke-width="1"/>
<g fill="none" stroke="#fff" stroke-width="2" stroke-linejoin="round">
<path d="M50.9 66.2 L57.5 74.8 L100.9 74.8 L107.0 81.5"/>
<path d="M87.6 83.1 L107.0 83.1"/>
<path d="M47.6 90.9 L107.0 90.9"/>
<path d="M60.3 98.0 L88.5 98.0 L95.0 91.9"/>
<path d="M99.2 101.8 L107.0 101.8"/>
<path d="M82.3 111.7 L107.0 111.7"/>
<path d="M72.7 113.7 L76.9 118.7 L107.0 118.7"/>
<path d="M50.9 142.2 L59.5 131.6 L105.8 131.6 L107.0 129.0"/>
<path d="M13.2 141.0 L26.4 150.1 L66.1 150.1 L71.1 141.8 L97.6 141.8 L100.9 150.1 L107.0 150.1"/>
<path d="M51.2 155.4 L77.7 155.4 L90.0 168.0"/>
<path d="M2.9 175.8 L27.3 160.9 L66.1 160.9 L71.1 168.4 L95.9 168.4 L101.0 160.9 L107.0 160.9"/>
<path d="M0.0 191.5 L16.5 181.6 L27.3 181.6 L38.8 167.5 L55.4 167.5 L62.0 161.8"/>
<path d="M47.6 172.8 L64.5 172.8 L69.0 167.0"/>
<path d="M85.2 172.5 L92.0 172.5 L100.0 182.0 L107.0 182.0"/>
<path d="M65.3 198.1 L81.0 175.8 L107.0 175.8"/>
<path d="M75.2 208.1 L99.2 193.2 L107.0 193.2"/>
<path d="M64.5 223.5 L69.4 225.4 L77.7 232.9 L107.0 232.9"/>
<path d="M103.4 237.8 L107.0 237.8"/>
<path d="M54.6 258.5 L77.7 244.0 L107.0 244.0"/>
<path d="M47.9 275.9 L67.8 263.5 L78.5 263.5 L89.3 250.3 L107.0 250.3"/>
<path d="M98.4 254.9 L107.0 254.9"/>
<path d="M70.0 223.0 L90.0 213.0 L107.0 213.0"/>
</g><g fill="none" stroke="#fff" stroke-opacity=".6" stroke-width="0.9">
<path d="M12.4 106.0 L92.6 106.0 L107.0 94.0"/>
<path d="M33.9 106.0 L46.3 112.4 L82.0 112.4"/>
<path d="M62.0 117.5 L94.0 117.5"/>
<path d="M19.8 203.1 L41.3 203.1 L53.7 209.7 L107.0 209.7"/>
<path d="M69.0 215.5 L99.0 215.5"/>
<path d="M42.0 189.0 L74.0 189.0"/>
<path d="M88.0 29.0 L102.0 39.0"/>
<path d="M91.0 51.0 L107.0 41.0"/>
<path d="M102.0 288.0 L107.0 285.0"/>
<path d="M98.0 301.0 L107.0 296.0"/>
</g><g fill="#fff">
<circle cx="50.9" cy="66.2" r="2"/>
<circle cx="87.6" cy="83.1" r="2"/>
<circle cx="47.6" cy="90.9" r="2"/>
<circle cx="60.3" cy="98.0" r="2"/>
<circle cx="99.2" cy="101.8" r="2"/>
<circle cx="82.3" cy="111.7" r="2"/>
<circle cx="72.7" cy="113.7" r="2"/>
<circle cx="50.9" cy="142.2" r="2"/>
<circle cx="13.2" cy="141.0" r="2"/>
<circle cx="51.2" cy="155.4" r="2"/>
<circle cx="2.9" cy="175.8" r="2"/>
<circle cx="47.6" cy="172.8" r="2"/>
<circle cx="85.2" cy="172.5" r="2"/>
<circle cx="65.3" cy="198.1" r="2"/>
<circle cx="75.2" cy="208.1" r="2"/>
<circle cx="64.5" cy="223.5" r="2"/>
<circle cx="103.4" cy="237.8" r="2"/>
<circle cx="54.6" cy="258.5" r="2"/>
<circle cx="47.9" cy="275.9" r="2"/>
<circle cx="98.4" cy="254.9" r="2"/>
<circle cx="104.2" cy="96.8" r="2"/>
<circle cx="12.4" cy="106.0" r="1.2"/>
<circle cx="62.0" cy="117.5" r="1.2"/>
<circle cx="19.8" cy="203.1" r="1.2"/>
<circle cx="69.0" cy="215.5" r="1.2"/>
</g>
<rect x="0" y="341" width="107" height="19" fill="#4a7ec4"/>
<text x="-0.5" y="359.5" font-family="Liberation Sans" font-weight="bold" font-size="22" fill="#fff" letter-spacing="-0.5">AI</text>
<circle cx="23" cy="351" r="6.5" fill="none" stroke="#9bbbe6" stroke-width=".8"/>
<circle cx="42.5" cy="351" r="6.5" fill="none" stroke="#9bbbe6" stroke-width=".8"/>
<circle cx="61.5" cy="351" r="6.5" fill="none" stroke="#9bbbe6" stroke-width=".8"/>
<circle cx="81" cy="351" r="6.5" fill="none" stroke="#9bbbe6" stroke-width=".8"/>
<circle cx="99.5" cy="351" r="6.5" fill="none" stroke="#9bbbe6" stroke-width=".8"/>
<path d="M22 347.5 L26 351 L22 354.5Z" fill="#9bbbe6"/>
<path d="M39 354.5 L45 347.5" stroke="#9bbbe6" stroke-width="1"/>
<rect x="59" y="348" width="6" height="6" fill="none" stroke="#9bbbe6" stroke-width=".8"/>
<circle cx="80" cy="350" r="2.5" fill="none" stroke="#9bbbe6" stroke-width=".8"/><path d="M82 352 L84 354" stroke="#9bbbe6" stroke-width=".8"/>
<g fill="#9bbbe6"><circle cx="97" cy="351" r=".7"/><circle cx="99.5" cy="351" r=".7"/><circle cx="102" cy="351" r=".7"/></g>
</svg>

<!-- ===== timeline ===== -->
<div class="a" style="left:0;top:751px;width:677px;height:23px;background:#1f1f1f"></div>

<div class="a" style="left:0;top:774px;width:117px;height:30px;background:#141414"></div>
<div class="a" style="left:0;top:804px;width:117px;height:18px;background:#181818"></div>
<div class="a" style="left:117px;top:774px;width:560px;height:6px;background:#141414"></div>
<div class="a tex" style="left:117px;top:804px;width:560px;height:18px"></div>
<div class="a" style="left:117px;top:780px;width:560px;height:24px;background:#393939"></div>
<!-- zoom slider -->
<div class="a btn" style="left:5px;top:754px;width:20px;height:18px"></div>
<svg class="a" style="left:9px;top:757px" width="12" height="12" viewBox="0 0 12 12"><circle cx="4.5" cy="4.5" r="3" fill="none" stroke="#e8e8e8" stroke-width="1.8"/><path d="M6.5 6.5 L10 10" stroke="#e8e8e8" stroke-width="2.2" stroke-linecap="round"/></svg>
<div class="a" style="left:30px;top:760px;width:174px;height:3px;border-radius:2px;background:linear-gradient(#2a2a2a,#8a8a8a)"></div>
<div class="a" style="left:111px;top:754px;width:15px;height:15px;border-radius:50%;background:radial-gradient(circle at 50% 30%,#9a9a9a,#5a5a5a 70%,#3a3a3a)"></div>
<div class="a btn" style="left:208px;top:753px;width:21px;height:20px"></div>
<svg class="a" style="left:211px;top:756px" width="15" height="15" viewBox="0 0 15 15"><circle cx="6" cy="6" r="4" fill="none" stroke="#f0f0f0" stroke-width="2"/><path d="M9 9 L13 13" stroke="#f0f0f0" stroke-width="2.6" stroke-linecap="round"/></svg>
<div class="a" style="left:236px;top:751px;width:1px;height:22px;background:#111"></div>
<div class="a" style="left:312px;top:751px;width:1px;height:22px;background:#111"></div>
<!-- edit buttons -->
<div class="a btn" style="left:247px;top:752px;width:24px;height:21px"></div>
<svg class="a" style="left:251px;top:755px" width="16" height="15" viewBox="0 0 16 15"><path d="M4 4 C9 2, 14 5, 11 11 L8 13" fill="none" stroke="#3f7fd0" stroke-width="2"/><path d="M1 2 L7 2 L3 8Z" fill="#3f7fd0"/></svg>
<div class="a btn" style="left:279px;top:752px;width:24px;height:21px;background:linear-gradient(#8a8a8a,#5a5a5a)"></div>
<svg class="a" style="left:283px;top:755px" width="16" height="15" viewBox="0 0 16 15"><path d="M12 4 C7 2, 2 5, 5 11 L8 13" fill="none" stroke="#5a8ac8" stroke-width="2"/><path d="M15 2 L9 2 L13 8Z" fill="#5a8ac8"/></svg>
<div class="a btn" style="left:321px;top:752px;width:24px;height:21px"></div>
<svg class="a" style="left:325px;top:754px" width="16" height="17" viewBox="0 0 16 17"><path d="M4 1 L10 12 M12 1 L6 12" stroke="#c0d0e8" stroke-width="1.6"/><circle cx="4.5" cy="13" r="2.6" fill="none" stroke="#3f7fd0" stroke-width="1.6"/><circle cx="11.5" cy="13" r="2.6" fill="none" stroke="#3f7fd0" stroke-width="1.6"/></svg>
<div class="a btn" style="left:353px;top:752px;width:24px;height:21px;background:linear-gradient(#8a9cb0,#5a6e84)"></div>
<svg class="a" style="left:357px;top:754px" width="16" height="17" viewBox="0 0 16 17"><path d="M8 1 V16" stroke="#3f7fd0" stroke-width="1.6"/><path d="M6 5 L2 8.5 L6 12Z M10 5 L14 8.5 L10 12Z" fill="#3f7fd0"/></svg>
<div class="a btn" style="left:385px;top:752px;width:24px;height:21px"></div>
<svg class="a" style="left:389px;top:755px" width="16" height="15" viewBox="0 0 16 15"><rect x="1" y="1" width="8" height="9" fill="#d8e4f4" stroke="#3a6ab0" stroke-width="1"/><rect x="6" y="5" width="8" height="9" fill="#4a8ad8" stroke="#2a5aa0" stroke-width="1"/></svg>
<div class="a btn" style="left:417px;top:752px;width:24px;height:21px"></div>
<svg class="a" style="left:421px;top:754px" width="16" height="17" viewBox="0 0 16 17"><rect x="1" y="2" width="11" height="13" fill="#e8c060" stroke="#8a6a20" stroke-width="1"/><rect x="4" y="1" width="5" height="3" fill="#ddd"/><rect x="6" y="6" width="9" height="10" fill="#f4f4f4" stroke="#999" stroke-width="1"/></svg>
<!-- gear -->
<div class="a btn" style="left:39px;top:779px;width:36px;height:23px"></div>
<svg class="a" style="left:44px;top:783px" width="28" height="16" viewBox="0 0 28 16">
 <g transform="translate(8 8)" fill="#e0e0e0"><circle r="5"/><g id="tooth"><rect x="-1.3" y="-7.5" width="2.6" height="4"/></g><use href="#tooth" transform="rotate(45)"/><use href="#tooth" transform="rotate(90)"/><use href="#tooth" transform="rotate(135)"/><use href="#tooth" transform="rotate(180)"/><use href="#tooth" transform="rotate(225)"/><use href="#tooth" transform="rotate(270)"/><use href="#tooth" transform="rotate(315)"/></g>
 <circle cx="8" cy="8" r="2.2" fill="#555"/>
 <path d="M19 6 H26 L22.5 11Z" fill="#e0e0e0"/>
</svg>

<!-- ruler -->
<div class="a" style="left:117px;top:780px;width:1px;height:12px;background:#e8e8e8"></div>
<div class="a" style="left:129px;top:780px;width:1px;height:3px;background:#d8d8d8"></div>
<div class="a" style="left:141px;top:780px;width:1px;height:3px;background:#d8d8d8"></div>
<div class="a" style="left:153px;top:780px;width:1px;height:3px;background:#d8d8d8"></div>
<div class="a" style="left:165px;top:780px;width:1px;height:3px;background:#d8d8d8"></div>
<div class="a" style="left:177px;top:780px;width:1px;height:9px;background:#e8e8e8"></div>
<div class="a" style="left:189px;top:780px;width:1px;height:3px;background:#d8d8d8"></div>
<div class="a" style="left:201px;top:780px;width:1px;height:3px;background:#d8d8d8"></div>
<div class="a" style="left:213px;top:780px;width:1px;height:3px;background:#d8d8d8"></div>
<div class="a" style="left:225px;top:780px;width:1px;height:3px;background:#d8d8d8"></div>
<div class="a" style="left:237px;top:780px;width:1px;height:12px;background:#e8e8e8"></div>
<div class="a" style="left:249px;top:780px;width:1px;height:3px;background:#d8d8d8"></div>
<div class="a" style="left:261px;top:780px;width:1px;height:3px;background:#d8d8d8"></div>
<div class="a" style="left:273px;top:780px;width:1px;height:3px;background:#d8d8d8"></div>
<div class="a" style="left:285px;top:780px;width:1px;height:3px;background:#d8d8d8"></div>
<div class="a" style="left:297px;top:780px;width:1px;height:9px;background:#e8e8e8"></div>
<div class="a" style="left:309px;top:780px;width:1px;height:3px;background:#d8d8d8"></div>
<div class="a" style="left:321px;top:780px;width:1px;height:3px;background:#d8d8d8"></div>
<div class="a" style="left:333px;top:780px;width:1px;height:3px;background:#d8d8d8"></div>
<div class="a" style="left:345px;top:780px;width:1px;height:3px;background:#d8d8d8"></div>
<div class="a" style="left:357px;top:780px;width:1px;height:12px;background:#e8e8e8"></div>
<div class="a" style="left:369px;top:780px;width:1px;height:3px;background:#d8d8d8"></div>
<div class="a" style="left:381px;top:780px;width:1px;height:3px;background:#d8d8d8"></div>
<div class="a" style="left:393px;top:780px;width:1px;height:3px;background:#d8d8d8"></div>
<div class="a" style="left:405px;top:780px;width:1px;height:3px;background:#d8d8d8"></div>
<div class="a" style="left:417px;top:780px;width:1px;height:9px;background:#e8e8e8"></div>
<div class="a" style="left:429px;top:780px;width:1px;height:3px;background:#d8d8d8"></div>
<div class="a" style="left:441px;top:780px;width:1px;height:3px;background:#d8d8d8"></div>
<div class="a" style="left:453px;top:780px;width:1px;height:3px;background:#d8d8d8"></div>
<div class="a" style="left:465px;top:780px;width:1px;height:3px;background:#d8d8d8"></div>
<div class="a" style="left:477px;top:780px;width:1px;height:12px;background:#e8e8e8"></div>
<div class="a" style="left:489px;top:780px;width:1px;height:3px;background:#d8d8d8"></div>
<div class="a" style="left:501px;top:780px;width:1px;height:3px;background:#d8d8d8"></div>
<div class="a" style="left:513px;top:780px;width:1px;height:3px;background:#d8d8d8"></div>
<div class="a" style="left:525px;top:780px;width:1px;height:3px;background:#d8d8d8"></div>
<div class="a" style="left:537px;top:780px;width:1px;height:9px;background:#e8e8e8"></div>
<div class="a" style="left:549px;top:780px;width:1px;height:3px;background:#d8d8d8"></div>
<div class="a" style="left:561px;top:780px;width:1px;height:3px;background:#d8d8d8"></div>
<div class="a" style="left:573px;top:780px;width:1px;height:3px;background:#d8d8d8"></div>
<div class="a" style="left:585px;top:780px;width:1px;height:3px;background:#d8d8d8"></div>
<div class="a" style="left:597px;top:780px;width:1px;height:12px;background:#e8e8e8"></div>
<div class="a" style="left:609px;top:780px;width:1px;height:3px;background:#d8d8d8"></div>
<div class="a" style="left:621px;top:780px;width:1px;height:3px;background:#d8d8d8"></div>
<div class="a" style="left:633px;top:780px;width:1px;height:3px;background:#d8d8d8"></div>
<div class="a" style="left:645px;top:780px;width:1px;height:3px;background:#d8d8d8"></div>
<div class="a" style="left:657px;top:780px;width:1px;height:9px;background:#e8e8e8"></div>
<div class="a" style="left:669px;top:780px;width:1px;height:3px;background:#d8d8d8"></div>
<div class="tc" style="left:117px">00:00:00;00</div>
<div class="tc" style="left:226px">00:00:08;21</div>
<div class="tc" style="left:288px">)</div>
<div class="tc" style="left:357px">00:00:20;00</div>
<div class="tc" style="left:477px">00:00:30;00</div>
<div class="tc" style="left:597px">00:00:40;00</div>
<!-- tracks header -->
<div class="a" style="left:0;top:822px;width:117px;height:62px;background:linear-gradient(#272727,#171717);border-top:1px solid #353535;border-bottom:1px solid #111"></div>
<div class="a" style="left:0;top:884px;width:117px;height:82px;background:linear-gradient(#282828,#202020);border-top:1px solid #3a3a3a"></div>
<div class="t" style="left:45px;top:848px;font-size:13px;color:#fff">Track 2</div>
<div class="t" style="left:45px;top:950px;font-size:13px;color:#fff">Track 1</div>
<svg class="a" style="left:99px;top:841px" width="12" height="28" viewBox="0 0 12 28">
 <path d="M0.8 3.5 C3.5 -0.3, 8 -0.3, 10.7 3.5 C8 7.3, 3.5 7.3, 0.8 3.5Z" fill="none" stroke="#4a4a4a" stroke-width="1.1"/>
 <circle cx="5.75" cy="3.5" r="1.5" fill="none" stroke="#3a3a3a" stroke-width="1"/>
 <path d="M2.6 18 V16 A3.3 3.3 0 0 1 9.2 15" fill="none" stroke="#404040" stroke-width="1.3"/>
 <rect x="0.5" y="18" width="10" height="7" fill="#3e3e3e"/><rect x="5" y="20" width="1.4" height="1.2" fill="#1f1f1f"/><rect x="5" y="22" width="1.4" height="1.2" fill="#1f1f1f"/>
</svg>
<svg class="a" style="left:99px;top:943px" width="12" height="23" viewBox="0 0 12 28">
 <path d="M0.8 3.5 C3.5 -0.3, 8 -0.3, 10.7 3.5 C8 7.3, 3.5 7.3, 0.8 3.5Z" fill="none" stroke="#4a4a4a" stroke-width="1.1"/>
 <circle cx="5.75" cy="3.5" r="1.5" fill="none" stroke="#3a3a3a" stroke-width="1"/>
 <path d="M2.6 18 V16 A3.3 3.3 0 0 1 9.2 15" fill="none" stroke="#404040" stroke-width="1.3"/>
 <rect x="0.5" y="18" width="10" height="7" fill="#3e3e3e"/><rect x="5" y="20" width="1.4" height="1.2" fill="#1f1f1f"/><rect x="5" y="22" width="1.4" height="1.2" fill="#1f1f1f"/>
</svg>
<!-- track area -->
<div class="a tex" style="left:117px;top:822px;width:560px;height:144px"></div>
<div class="a" style="left:117px;top:821px;width:560px;height:2px;background:#0e0e0e"></div>
<div class="a" style="left:117px;top:883px;width:560px;height:2px;background:#0e0e0e"></div>
<!-- clips track 2 -->
<div class="a" style="left:117px;top:822px;width:104px;height:61px;border-radius:4px;background:linear-gradient(#5c5c5c,#525252);border:1px solid #686868"></div>
<div class="a" style="left:221px;top:822px;width:114px;height:61px;border-radius:4px;background:linear-gradient(#073b69,#03264a);border:1px solid #0f4678"></div>
<div class="a" style="left:118px;top:841px;width:11px;height:28px;border-radius:3px;background:linear-gradient(#56a8a0,#176a66)"></div>
<div class="a" style="left:323px;top:841px;width:11px;height:28px;border-radius:3px;background:linear-gradient(#56a8a0,#176a66)"></div>
<svg class="a" style="left:138px;top:842px" width="54" height="23" viewBox="0 0 54 23">
 <path d="M1.2 1 H13.5 V8.5 C13.5 12, 10 14.5, 7.35 16.5 C4.7 14.5, 1.2 12, 1.2 8.5Z" fill="none" stroke="#5a5a8a" stroke-width="1.1"/>
 <path d="M9.5 2.5 L12 2.5 L12 6 L10 5Z" fill="#5a5a8a"/>
 <text x="17.5" y="8.3" font-family="Liberation Serif" font-size="8.6" fill="#6e6e98" letter-spacing="-.2">Nation</text>
 <text x="17.5" y="15.5" font-family="Liberation Serif" font-size="8.6" fill="#6e6e98" letter-spacing="-.3">University</text>
 <rect x="17.5" y="17.5" width="28" height=".8" fill="#6e6e98"/>
 <rect x="17.5" y="19.6" width="27" height="1.6" fill="#6e6e98" opacity=".7"/>
</svg>
<svg class="a" style="left:230px;top:842px" width="54" height="23" viewBox="0 0 54 23">
 <path d="M1.2 1 H13.5 V8.5 C13.5 12, 10 14.5, 7.35 16.5 C4.7 14.5, 1.2 12, 1.2 8.5Z" fill="none" stroke="#6a6a96" stroke-width="1.1"/>
 <path d="M9.5 2.5 L12 2.5 L12 6 L10 5Z" fill="#6a6a96"/>
 <text x="17.5" y="8.3" font-family="Liberation Serif" font-size="8.6" fill="#8080a6" letter-spacing="-.2">Nation</text>
 <text x="17.5" y="15.5" font-family="Liberation Serif" font-size="8.6" fill="#8080a6" letter-spacing="-.3">University</text>
 <rect x="17.5" y="17.5" width="28" height=".8" fill="#8080a6"/>
 <rect x="17.5" y="19.6" width="27" height="1.6" fill="#8080a6" opacity=".7"/>
</svg>
<div class="a" style="left:197px;top:846px;width:17px;height:18px;overflow:hidden"><div class="t" style="left:0;top:2px;font-size:12.5px;color:#fff">Nation</div></div>
<div class="a" style="left:290px;top:846px;width:33px;height:18px;overflow:hidden"><div class="t" style="left:0;top:2px;font-size:12.5px;color:#fff">Nation</div></div>
<!-- clip track 1 -->
<div class="a" style="left:117px;top:884px;width:218px;height:90px;border-radius:4px;background:linear-gradient(#5a5a5a,#525252);border:1px solid #666"></div>
<svg class="a" style="left:125px;top:944px" width="43" height="22" viewBox="0 0 43 22">
 <defs><linearGradient id="tb1" x1="0" y1="0" x2="1" y2="0"><stop offset="0" stop-color="#7fa9dc"/><stop offset="1" stop-color="#9cc2ec"/></linearGradient></defs>
 <rect width="43" height="22" fill="#050505"/>
 <rect x="0" y="3.5" width="43" height="17.5" fill="url(#tb1)"/>
 <path d="M15 6 C19 6, 20 9, 19.5 12 C21 14, 20 18, 17 19 L12 19 C10 16, 13 14, 13 11 C13 8, 14 6, 15 6Z" fill="#f4f8fe"/>
 <path d="M5 9 H14 M4 13 H12" stroke="#cfe0f4" stroke-width=".8"/>
 <path d="M22 10 H37 M23 12 H36 M24 15.5 H32" stroke="#44556a" stroke-width=".6"/>
</svg>
<div class="t" style="left:176px;top:952px;font-size:11.5px;color:#fff">tha1001_05_00.mp4</div>
<!-- playhead -->
<div class="a" style="left:221px;top:790px;width:1px;height:176px;background:repeating-linear-gradient(#c8c8c8 0,#c8c8c8 2px,#777 2px,#777 3px)"></div>
<svg class="a" style="left:201px;top:776px" width="42" height="20" viewBox="0 0 42 20">
 <defs><linearGradient id="ph" x1="0" y1="0" x2="0" y2="1"><stop offset="0" stop-color="#b8b8b8"/><stop offset="1" stop-color="#7a7a7a"/></linearGradient></defs>
 <rect x="1" y="1" width="9" height="10" rx="1" fill="#2fa83a" stroke="#1a6a20" stroke-width=".8"/>
 <path d="M4 3 V9 M6 3 V9" stroke="#b8f0b8" stroke-width=".8"/>
 <rect x="32" y="1" width="9" height="10" rx="1" fill="#d03838" stroke="#801818" stroke-width=".8"/>
 <path d="M35 3 V9 M37 3 V9" stroke="#f8b8b8" stroke-width=".8"/>
 <path d="M9 0.5 H33 V10 L21 19.5 L9 10Z" fill="url(#ph)" stroke="#5a5a5a" stroke-width=".8"/>
</svg>
<!-- bottom bar -->
<div class="a" style="left:0;top:966px;width:117px;height:13px;background:#1a1a1a"></div>
<div class="a" style="left:10px;top:972px;width:94px;height:3px;border-radius:2px;background:linear-gradient(#555,#999)"></div>
<div class="a" style="left:26px;top:966px;width:15px;height:15px;border-radius:50%;background:radial-gradient(circle at 50% 30%,#9a9a9a,#5a5a5a 70%,#3a3a3a)"></div>
<div class="a" style="left:117px;top:966px;width:560px;height:13px;background:#1e1e1e"></div>
<svg class="a" style="left:122px;top:970px" width="8" height="9"><path d="M6.5 0.5 V8 L1 4.25Z" fill="#cfcfcf"/></svg>
<div class="a" style="left:134px;top:967px;width:543px;height:12px;border-radius:3px 0 0 3px;background:linear-gradient(#a8a8a8,#7a7a7a)"></div>
</body></html>
